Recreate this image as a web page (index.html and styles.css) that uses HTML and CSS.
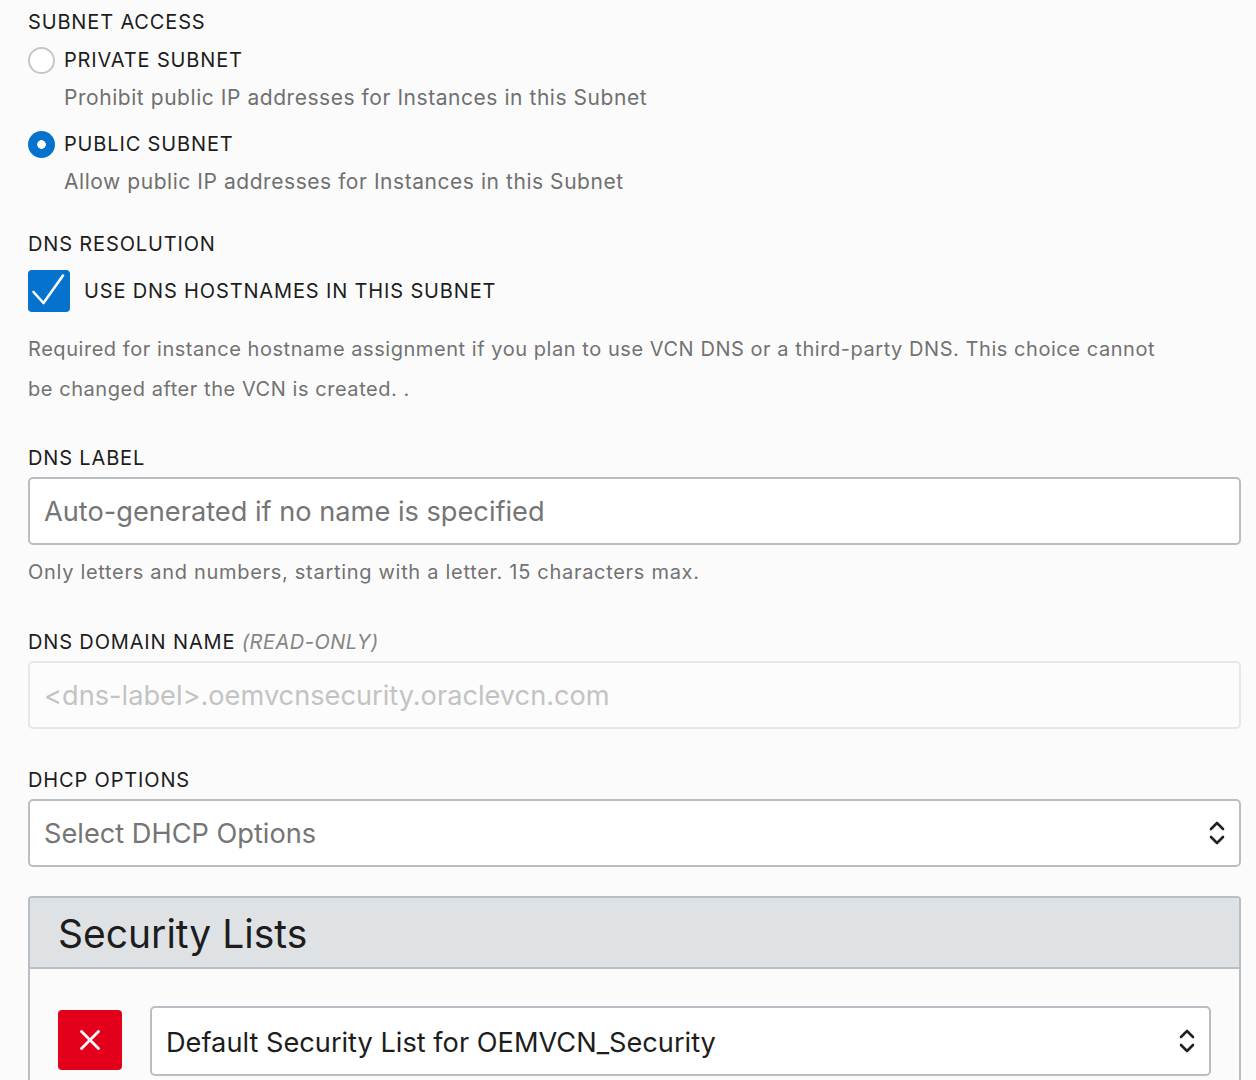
FILE: index.html
```html
<!DOCTYPE html>
<html>
<head>
<meta charset="utf-8">
<link rel="stylesheet" href="styles.css">
</head>
<body>
<div class="form">
  <div class="label first">SUBNET ACCESS</div>
  <div class="radio-row r1"><span class="radio"></span><span class="opt">PRIVATE SUBNET</span></div>
  <div class="desc">Prohibit public IP addresses for Instances in this Subnet</div>
  <div class="radio-row r2"><span class="radio on"></span><span class="opt">PUBLIC SUBNET</span></div>
  <div class="desc">Allow public IP addresses for Instances in this Subnet</div>

  <div class="label dnsres">DNS RESOLUTION</div>
  <div class="check-row">
    <span class="checkbox"><svg width="42" height="42" viewBox="0 0 42 42"><path d="M5.5 22 L15.5 33 L35 5.5" fill="none" stroke="#fff" stroke-width="2.6" stroke-linecap="round" stroke-linejoin="round"/></svg></span>
    <span class="opt">USE DNS HOSTNAMES IN THIS SUBNET</span>
  </div>
  <div class="help">Required for instance hostname assignment if you plan to use VCN DNS or a third-party DNS. This choice cannot be changed after the VCN is created. .</div>

  <div class="label dnslabel">DNS LABEL</div>
  <div class="input">Auto-generated if no name is specified</div>
  <div class="hint">Only letters and numbers, starting with a letter. 15 characters max.</div>

  <div class="label dnsdomain">DNS DOMAIN NAME <em>(READ-ONLY)</em></div>
  <div class="input readonly">&lt;dns-label&gt;.oemvcnsecurity.oraclevcn.com</div>

  <div class="label dhcp">DHCP OPTIONS</div>
  <div class="input select">Select DHCP Options
    <svg class="chev" width="16" height="28" viewBox="0 0 16 28"><path d="M2 10 L8 4 L14 10" fill="none" stroke="#222" stroke-width="2.6" stroke-linecap="round" stroke-linejoin="round"/><path d="M2 18 L8 24 L14 18" fill="none" stroke="#222" stroke-width="2.6" stroke-linecap="round" stroke-linejoin="round"/></svg>
  </div>

  <div class="panel">
    <div class="panel-head">Security Lists</div>
    <div class="panel-body">
      <div class="remove"><svg width="24" height="24" viewBox="0 0 24 24"><path d="M3.5 3.5 L20.5 20.5 M20.5 3.5 L3.5 20.5" stroke="#fff" stroke-width="2.8" stroke-linecap="round"/></svg></div>
      <div class="input select sl">Default Security List for OEMVCN_Security
        <svg class="chev" width="16" height="28" viewBox="0 0 16 28"><path d="M2 10 L8 4 L14 10" fill="none" stroke="#222" stroke-width="2.6" stroke-linecap="round" stroke-linejoin="round"/><path d="M2 18 L8 24 L14 18" fill="none" stroke="#222" stroke-width="2.6" stroke-linecap="round" stroke-linejoin="round"/></svg>
      </div>
    </div>
  </div>
</div>
</body>
</html>
```

FILE: styles.css
```css
html, body {
  margin: 0;
  padding: 0;
  background: #fbfbfb;
  overflow: hidden;
}
body {
  font-family: Inter, "Noto Sans", sans-serif;
  color: #1d1d1d;
  height: 1080px;
}
.form {
  padding: 10px 15px 0 28px;
}
.label {
  font-size: 20px;
  line-height: 24px;
  height: 24px;
  letter-spacing: 0.85px;
  color: #1d1d1d;
}
.label em {
  font-style: italic;
  color: #858585;
  letter-spacing: 0.5px;
}
.label.dnsres { margin-top: 36px; }
.label.dnslabel { margin-top: 37px; }
.label.dnsdomain { margin-top: 44px; }
.label.dhcp { margin-top: 39px; }

.radio-row {
  display: flex;
  align-items: center;
  height: 28px;
  gap: 9px;
}
.radio-row.r1 { margin-top: 12px; }
.radio-row.r2 { margin-top: 18px; }
.radio {
  width: 27px;
  height: 27px;
  box-sizing: border-box;
  border-radius: 50%;
  border: 2px solid #c3c7cc;
  background: #fff;
  flex: none;
}
.radio.on {
  border: none;
  background: radial-gradient(circle, #fff 0 4px, #0572ce 4.6px);
}
.opt {
  font-size: 20px;
  letter-spacing: 0.85px;
  line-height: 24px;
}
.desc {
  margin-top: 10px;
  padding-left: 36px;
  font-size: 21px;
  letter-spacing: 0.55px;
  line-height: 28px;
  color: #707070;
}
.check-row {
  display: flex;
  align-items: center;
  gap: 14px;
  margin-top: 14px;
  height: 42px;
}
.checkbox {
  width: 42px;
  height: 42px;
  border-radius: 4px;
  background: #0572ce;
  flex: none;
  display: block;
}
.checkbox svg { display: block; }
.help {
  margin-top: 17px;
  font-size: 20px;
  letter-spacing: 0.55px;
  line-height: 40px;
  color: #727272;
  max-width: 1150px;
}
.input {
  margin-top: 7px;
  box-sizing: border-box;
  height: 68px;
  border: 2px solid #b9bec4;
  border-radius: 5px;
  background: #fff;
  font-size: 27.2px;
  line-height: 66px;
  padding-left: 14px;
  color: #757575;
  position: relative;
}
.input.readonly {
  border-color: #e6e7e9;
  background: #fcfcfc;
  color: #c3c3c3;
}
.hint {
  margin-top: 13px;
  font-size: 20px;
  letter-spacing: 0.7px;
  line-height: 28px;
  color: #727272;
}
.chev {
  position: absolute;
  right: 14px;
  top: 50%;
  margin-top: -14px;
}
.panel {
  margin-top: 29px;
  border: 2px solid #b9bec4;
  border-bottom: none;
  border-radius: 4px 4px 0 0;
  height: 200px;
}
.panel-head {
  height: 71px;
  box-sizing: border-box;
  background: #dfe2e5;
  border-bottom: 2px solid #b9bec4;
  font-size: 39px;
  line-height: 72px;
  padding-left: 28px;
  color: #1d1d1d;
}
.panel-body {
  display: flex;
  align-items: flex-start;
  padding: 37px 28px 0 28px;
  gap: 28px;
}
.remove {
  margin-top: 4px;
  width: 64px;
  height: 60px;
  border-radius: 4px;
  background: #e3001b;
  display: flex;
  align-items: center;
  justify-content: center;
  flex: none;
}
.remove svg { display: block; }
.input.sl {
  margin-top: 0;
  flex: 1;
  height: 70px;
  line-height: 70px;
  color: #1d1d1d;
}
```
